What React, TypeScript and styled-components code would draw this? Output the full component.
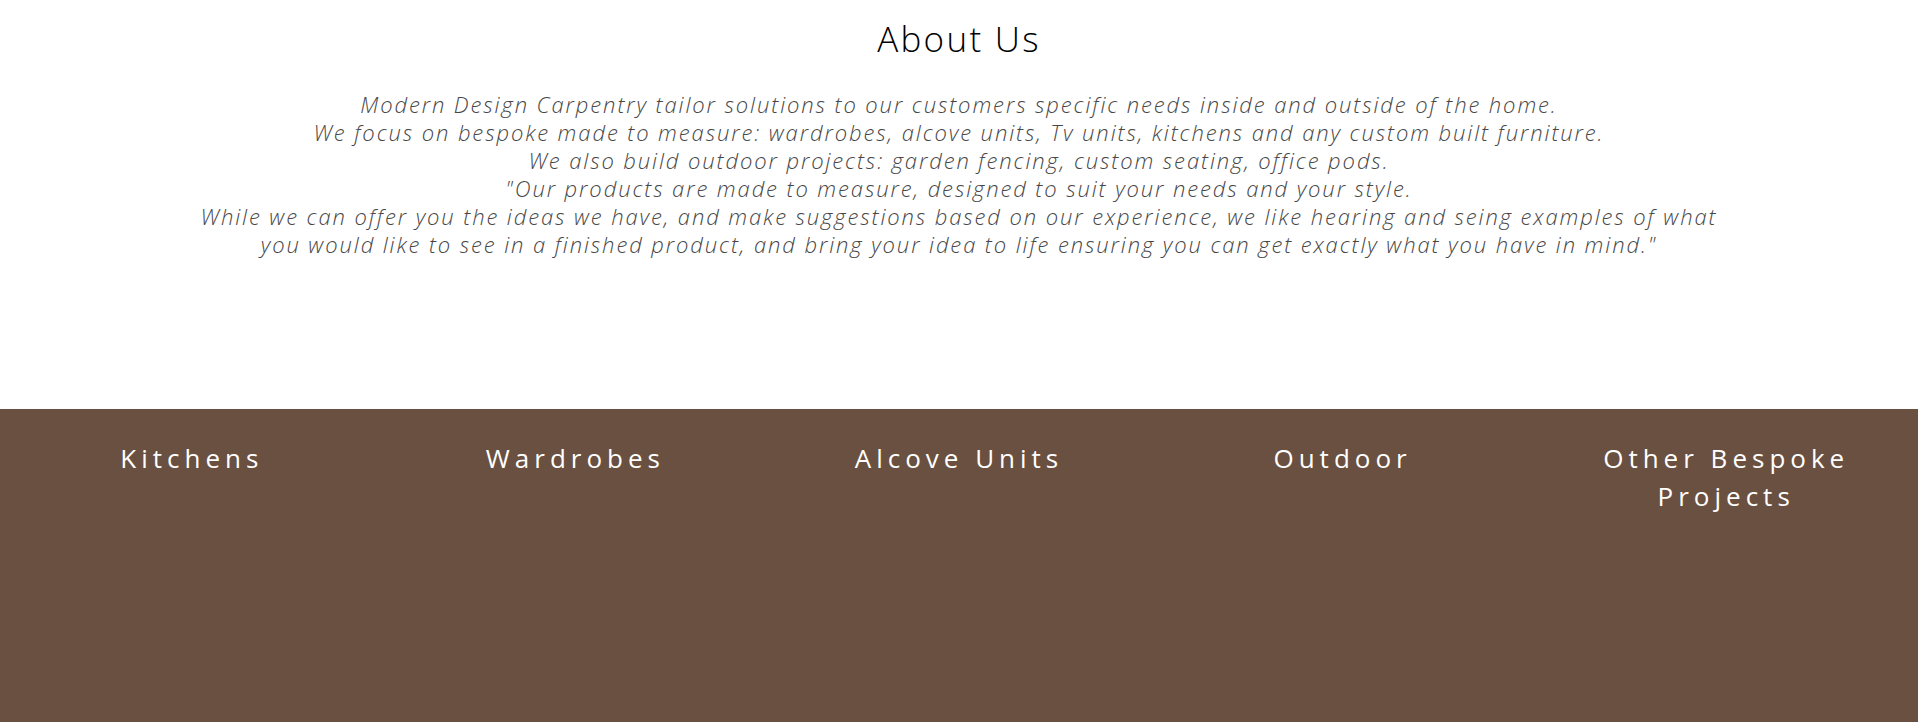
import React from "react";
import styled, { createGlobalStyle } from "styled-components";

const Global = createGlobalStyle`
  html, body { margin: 0; padding: 0; background: #ffffff; }
  body { font-family: "Open Sans", "Liberation Sans", sans-serif; }
`;

const Page = styled.div`
  display: flex;
  flex-direction: column;
  width: 100%;
`;

const About = styled.section`
  display: flex;
  flex-direction: column;
  align-items: center;
  padding-top: 14px;
  height: 409px;
  box-sizing: border-box;
`;

const Title = styled.h2`
  margin: 0;
  font-family: "Open Sans", sans-serif;
  font-weight: 300;
  font-size: 35px;
  line-height: 49px;
  letter-spacing: 2.3px;
  color: #000000;
`;

const Text = styled.p`
  margin: 27px 0 0;
  font-family: "Open Sans", sans-serif;
  font-style: italic;
  font-weight: 300;
  font-size: 22px;
  line-height: 28px;
  letter-spacing: 1.9px;
  color: #474747;
  text-align: center;
`;

const Band = styled.section`
  display: grid;
  grid-template-columns: repeat(5, 1fr);
  background: #6a5040;
  height: 313px;
  padding-top: 30px;
  box-sizing: border-box;
`;

const Category = styled.h3`
  margin: 0;
  padding: 0 20px;
  text-align: center;
  font-family: "Open Sans", sans-serif;
  font-weight: 400;
  font-size: 26px;
  line-height: 38px;
  letter-spacing: 5px;
  color: #ffffff;
`;

const lines = [
  "Modern Design Carpentry tailor solutions to our customers specific needs inside and outside of the home.",
  "We focus on bespoke made to measure: wardrobes, alcove units, Tv units, kitchens and any custom built furniture.",
  "We also build outdoor projects: garden fencing, custom seating, office pods.",
  "\"Our products are made to measure, designed to suit your needs and your style.",
  "While we can offer you the ideas we have, and make suggestions based on our experience, we like hearing and seing examples of what",
  "you would like to see in a finished product, and bring your idea to life ensuring you can get exactly what you have in mind.\"",
];

const categories = ["Kitchens", "Wardrobes", "Alcove Units", "Outdoor", "Other Bespoke Projects"];

export default function App() {
  return (
    <Page>
      <Global />
      <About>
        <Title>About Us</Title>
        <Text>
          {lines.map((l, i) => (
            <React.Fragment key={i}>
              {l}
              {i < lines.length - 1 && <br />}
            </React.Fragment>
          ))}
        </Text>
      </About>
      <Band>
        {categories.map((c) => (
          <Category key={c}>{c}</Category>
        ))}
      </Band>
    </Page>
  );
}
